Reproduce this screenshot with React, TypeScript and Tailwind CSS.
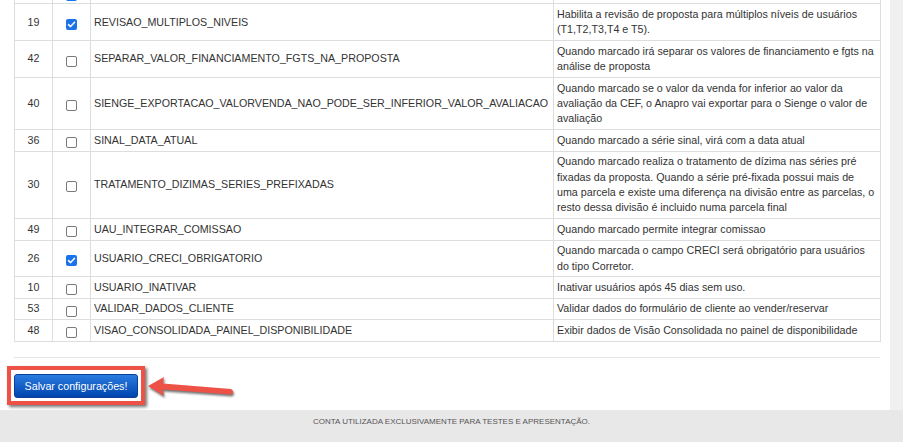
import React from "react";

type Row = { id: number | null; checked: boolean; name: string; desc: string[] };

const rows: Row[] = [
  { id: null, checked: true, name: "", desc: [""] },
  { id: 19, checked: true, name: "REVISAO_MULTIPLOS_NIVEIS", desc: ["Habilita a revisão de proposta para múltiplos níveis de usuários", "(T1,T2,T3,T4 e T5)."] },
  { id: 42, checked: false, name: "SEPARAR_VALOR_FINANCIAMENTO_FGTS_NA_PROPOSTA", desc: ["Quando marcado irá separar os valores de financiamento e fgts na", "análise de proposta"] },
  { id: 40, checked: false, name: "SIENGE_EXPORTACAO_VALORVENDA_NAO_PODE_SER_INFERIOR_VALOR_AVALIACAO", desc: ["Quando marcado se o valor da venda for inferior ao valor da", "avaliação da CEF, o Anapro vai exportar para o Sienge o valor de", "avaliação"] },
  { id: 36, checked: false, name: "SINAL_DATA_ATUAL", desc: ["Quando marcado a série sinal, virá com a data atual"] },
  { id: 30, checked: false, name: "TRATAMENTO_DIZIMAS_SERIES_PREFIXADAS", desc: ["Quando marcado realiza o tratamento de dízima nas séries pré", "fixadas da proposta. Quando a série pré-fixada possui mais de", "uma parcela e existe uma diferença na divisão entre as parcelas, o", "resto dessa divisão é incluido numa parcela final"] },
  { id: 49, checked: false, name: "UAU_INTEGRAR_COMISSAO", desc: ["Quando marcado permite integrar comissao"] },
  { id: 26, checked: true, name: "USUARIO_CRECI_OBRIGATORIO", desc: ["Quando marcada o campo CRECI será obrigatório para usuários", "do tipo Corretor."] },
  { id: 10, checked: false, name: "USUARIO_INATIVAR", desc: ["Inativar usuários após 45 dias sem uso."] },
  { id: 53, checked: false, name: "VALIDAR_DADOS_CLIENTE", desc: ["Validar dados do formulário de cliente ao vender/reservar"] },
  { id: 48, checked: false, name: "VISAO_CONSOLIDADA_PAINEL_DISPONIBILIDADE", desc: ["Exibir dados de Visão Consolidada no painel de disponibilidade"] },
];

function Check({ checked }: { checked: boolean }) {
  if (checked) {
    return (
      <span className="mx-auto block w-[11px] h-[11px] translate-y-[2px] rounded-[2px] bg-[#1a73e8]">
        <svg viewBox="0 0 11 11" width="11" height="11" className="block">
          <path d="M2.5 5.6 L4.6 7.6 L8.6 3.3" fill="none" stroke="white" strokeWidth="1.5" strokeLinecap="round" strokeLinejoin="round" />
        </svg>
      </span>
    );
  }
  return <span className="mx-auto block w-[11px] h-[11px] translate-y-[2px] rounded-[2px] border border-[#7a7a7a] bg-white" />;
}

export default function App() {
  const td = "border border-[#dddddd] px-[3px] py-[2.5px] align-middle";
  return (
    <div
      className="w-[903px] h-[442px] overflow-hidden bg-[#f0f0f0] flex flex-col text-[#333333]"
      style={{ fontFamily: '"Liberation Sans", Arial, sans-serif' }}
    >
      <div className="flex h-[410px]">
        <div className="w-[890px] h-[410px] bg-white overflow-hidden">
          <table className="ml-[14px] -mt-[18px] w-[866px] table-fixed border-collapse text-[10.7px] leading-[15.4px]">
            <colgroup>
              <col className="w-[38px]" />
              <col className="w-[38px]" />
              <col className="w-[463px]" />
              <col className="w-[327px]" />
            </colgroup>
            <tbody>
              {rows.map((r, idx) => (
                <tr key={idx}>
                  <td className={`${td} text-center`}>{r.id ?? ""}</td>
                  <td className={td}>
                    <Check checked={r.checked} />
                  </td>
                  <td className={`${td} whitespace-nowrap`}>{r.name}</td>
                  <td className={`${td} whitespace-nowrap`}>
                    {r.desc.map((l, i) => (
                      <div key={i} className="min-h-[15.4px]">{l}</div>
                    ))}
                  </td>
                </tr>
              ))}
            </tbody>
          </table>
          <div className="ml-[14px] w-[866px] mt-[15px] border-t border-[#e5e5e5]" />
          <div className="mt-[8px] ml-[7px] flex items-center">
            <div className="border-[4px] border-[#ee5247] bg-white p-[3px] shadow-[2px_2px_3px_rgba(0,0,0,0.55)]">
              <button className="w-[124px] h-[24px] rounded-[3px] border border-[#0b3f94] bg-gradient-to-b from-[#2a7be0] to-[#0044ae] text-white text-[10.7px] leading-[22px]">
                Salvar configurações!
              </button>
            </div>
            <svg width="92" height="28" viewBox="0 0 92 28" className="ml-[1px] mt-[4px] drop-shadow-[1px_2px_1px_rgba(0,0,0,0.55)]">
              <path d="M2 13 L18 4 L16.8 10.4 L85 16 Q89.5 19 85 21.6 L16.6 16.4 L18 23 Z" fill="#ee5247" />
            </svg>
          </div>
        </div>
      </div>
      <div className="h-[32px] bg-[#e9e8e9] flex justify-center pt-[7px]">
        <span className="text-[8px] leading-[10px] text-[#555555] uppercase">
          CONTA UTILIZADA EXCLUSIVAMENTE PARA TESTES E APRESENTAÇÃO.
        </span>
      </div>
    </div>
  );
}
